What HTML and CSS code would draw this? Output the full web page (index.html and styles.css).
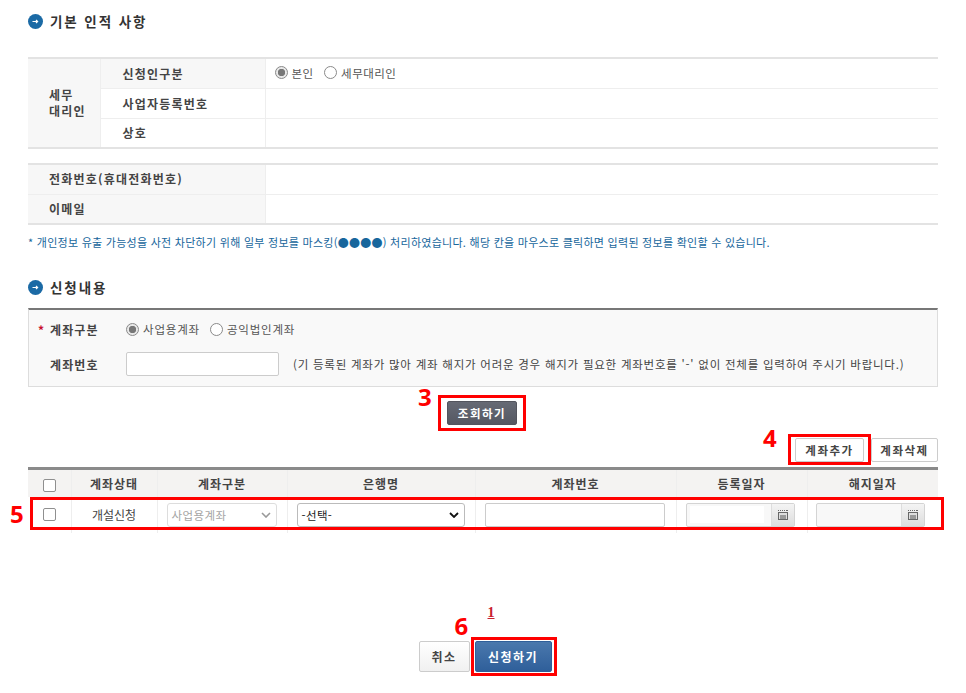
FILE: index.html
```html
<!DOCTYPE html>
<html lang="ko">
<head>
<meta charset="utf-8">
<title>신청내용</title>
<link rel="stylesheet" href="styles.css">
</head>
<body>
<main class="page">
  <h2 class="heading first">
    <svg class="bullet" viewBox="0 0 15 15"><circle cx="7.5" cy="7.5" r="7.5" fill="#1b6aa5"/><path d="M4.5 7.5h5M8 6l1.6 1.5L8 9" stroke="#fff" stroke-width="1.2" fill="none"/></svg>
    <span>기본 인적 사항</span>
  </h2>
  <table class="info">
    <colgroup><col class="c1"><col class="c2"><col></colgroup>
    <tr>
      <th rowspan="3" class="group">세무<br>대리인</th>
      <th class="sub shaded">신청인구분</th>
      <td>
        <label class="radio"><i class="dot on"></i>본인</label>
        <label class="radio"><i class="dot"></i>세무대리인</label>
      </td>
    </tr>
    <tr><th class="sub">사업자등록번호</th><td></td></tr>
    <tr><th class="sub">상호</th><td></td></tr>
  </table>
  <table class="info second">
    <colgroup><col class="wide"><col></colgroup>
    <tr><th class="group">전화번호(휴대전화번호)</th><td></td></tr>
    <tr><th class="group">이메일</th><td></td></tr>
  </table>
  <p class="note">* 개인정보 유출 가능성을 사전 차단하기 위해 일부 정보를 마스킹(●●●●) 처리하였습니다. 해당 칸을 마우스로 클릭하면 입력된 정보를 확인할 수 있습니다.</p>

  <h2 class="heading">
    <svg class="bullet" viewBox="0 0 15 15"><circle cx="7.5" cy="7.5" r="7.5" fill="#1b6aa5"/><path d="M4.5 7.5h5M8 6l1.6 1.5L8 9" stroke="#fff" stroke-width="1.2" fill="none"/></svg>
    <span>신청내용</span>
  </h2>
  <section class="search">
    <div class="search-row">
      <b class="label"><em>*</em>계좌구분</b>
      <label class="radio"><i class="dot on"></i>사업용계좌</label>
      <label class="radio"><i class="dot"></i>공익법인계좌</label>
    </div>
    <div class="search-row">
      <b class="label">계좌번호</b>
      <input class="text acct" type="text">
      <span class="hint">(기 등록된 계좌가 많아 계좌 해지가 어려운 경우 해지가 필요한 계좌번호를 '-' 없이 전체를 입력하여 주시기 바랍니다.)</span>
    </div>
  </section>
  <div class="center query-wrap">
    <div class="mark-wrap">
      <button class="btn dark">조회하기</button>
      <span class="box box3"></span><span class="num num3">3</span>
    </div>
  </div>
  <div class="right-btns">
    <div class="mark-wrap">
      <button class="btn light add">계좌추가</button>
      <span class="box box4"></span><span class="num num4">4</span>
    </div>
    <button class="btn light">계좌삭제</button>
  </div>
  <div class="mark-wrap">
    <table class="grid">
      <colgroup><col class="g1"><col class="g2"><col class="g3"><col class="g4"><col class="g5"><col class="g6"><col></colgroup>
      <tr>
        <th><i class="check"></i></th><th>계좌상태</th><th>계좌구분</th><th>은행명</th><th>계좌번호</th><th>등록일자</th><th>해지일자</th>
      </tr>
      <tr>
        <td><i class="check raised"></i></td>
        <td>개설신청</td>
        <td><span class="select off">사업용계좌<svg viewBox="0 0 10 6"><path d="M1 1l4 4 4-4" stroke="#999" stroke-width="1.6" fill="none"/></svg></span></td>
        <td><span class="select">-선택-<svg viewBox="0 0 10 6"><path d="M1 1l4 4 4-4" stroke="#111" stroke-width="1.8" fill="none"/></svg></span></td>
        <td><input class="text full" type="text"></td>
        <td>
          <span class="date"><span class="date-field"><i class="date-white"></i></span><span class="cal"><svg viewBox="0 0 12 12"><path d="M1 1.5h1M3 1.5h1M5 1.5h1M7 1.5h1M9 1.5h2" stroke="#666"/><rect x="1.5" y="3.5" width="9" height="7" fill="#ddd" stroke="#666"/><path d="M3 7h6M3 9h6" stroke="#555"/></svg></span></span>
        </td>
        <td>
          <span class="date"><span class="date-field"></span><span class="cal"><svg viewBox="0 0 12 12"><path d="M1 1.5h1M3 1.5h1M5 1.5h1M7 1.5h1M9 1.5h2" stroke="#666"/><rect x="1.5" y="3.5" width="9" height="7" fill="#ddd" stroke="#666"/><path d="M3 7h6M3 9h6" stroke="#555"/></svg></span></span>
        </td>
      </tr>
    </table>
    <span class="box box5"></span><span class="num num5">5</span>
  </div>
  <div class="center submit-wrap">
    <div class="mark-wrap submit-row">
      <a class="foot-link">1</a>
      <button class="btn cancel">취소</button>
      <div class="mark-wrap">
        <button class="btn primary">신청하기</button>
        <span class="box box6"></span><span class="num num6">6</span>
      </div>
    </div>
  </div>
</main>
</body>
</html>
```
FILE: styles.css
```css
* { box-sizing: border-box; }
html, body { margin: 0; padding: 0; background: #fff; }
body {
  width: 966px;
  height: 693px;
  overflow: hidden;
  font-family: "Noto Sans CJK KR", "Noto Sans", sans-serif;
  font-size: 12px;
  color: #333;
}
.page { width: 938px; padding-left: 28px; }
.heading {
  display: flex;
  align-items: center;
  gap: 7px;
  height: 20px;
  margin: 0;
  font-size: 13.5px;
  font-weight: 700;
  color: #333;
  letter-spacing: 1.9px;
}
.heading.first { margin-top: 11px; }
.bullet { width: 15px; height: 15px; flex: none; }

table { border-collapse: collapse; table-layout: fixed; width: 910px; }
.info { margin-top: 26px; border-top: 2px solid #e3e3e3; border-bottom: 2px solid #e3e3e3; }
.info.second { margin-top: 14px; }
.info tr { height: 30px; }
.info th, .info td { padding: 0; border-bottom: 1px solid #eee; font-size: 12px; }
.info tr:last-child th, .info tr:last-child td { border-bottom: 0; }
.info th { background: #f7f7f7; text-align: left; font-weight: 700; color: #444; letter-spacing: 1.2px; border-right: 1px solid #eee; }
.info td { padding-left: 9px; color: #555; }
.c1 { width: 72px; }
.c2 { width: 165px; }
.wide { width: 237px; }
.info th.group { padding-left: 21px; line-height: 16px; }
.info th.sub { padding-left: 22px; background: #fff; }
.info th.sub.shaded { background: #f7f7f7; }
.radio { display: inline-flex; align-items: center; gap: 4px; margin-right: 7px; font-size: 11.5px; color: #555; letter-spacing: .5px; }
.dot { width: 13px; height: 13px; border: 1px solid #8a8a8a; border-radius: 50%; background: #fff; display: inline-block; }
.dot.on { background: radial-gradient(circle, #777 0 3.4px, #e8e8e8 4px); }

.note { margin: 10px 0 0; height: 15px; font-size: 11px; line-height: 15px; color: #17669c; white-space: nowrap; letter-spacing: .27px; }

.heading:not(.first) { margin-top: 27px; }
.search {
  height: 79px;
  margin-top: 11px;
  border: 1px solid #ddd;
  border-top: 2px solid #777;
  background: #f9f9f9;
  padding-top: 9px;
}
.search-row { display: flex; align-items: center; height: 20px; padding-left: 21px; }
.search-row + .search-row { margin-top: 13px; height: 24px; }
.label { width: 76px; font-weight: 700; color: #444; letter-spacing: 1.1px; position: relative; }
.label em { position: absolute; left: -12px; color: #c8102e; font-style: normal; }
.search .radio { font-size: 11.5px; margin-right: 10px; letter-spacing: .8px; }
.text { height: 24px; border: 1px solid #ccc; border-radius: 2px; background: #fff; }
.acct { width: 153px; }
.hint { margin-left: 14px; font-size: 11.5px; color: #444; letter-spacing: .76px; white-space: nowrap; }

.center { display: flex; justify-content: center; }
.mark-wrap { position: relative; }
.query-wrap { margin-top: 14px; padding-left: 53px; margin-left: -55px; }
.btn { display: block; font-family: inherit; font-weight: 700; font-size: 11.5px; border-radius: 2px; padding: 0; cursor: pointer; letter-spacing: 1.5px; }
.dark { width: 70px; height: 24px; color: #fff; background: linear-gradient(#666a75, #555862); border: 1px solid #53555e; }
.right-btns { display: flex; justify-content: flex-end; gap: 7px; margin-top: 13px; }
.light { width: 67px; height: 24px; background: #fff; color: #444; border: 1px solid #ccc; }
.light.add { width: 69px; }
.grid { margin-top: 5px; border-top: 3px solid #8a8a8a; }
.g1 { width: 43px; } .g2 { width: 86px; } .g3 { width: 130px; } .g4 { width: 188px; } .g5 { width: 201px; } .g6 { width: 131px; }
.grid th, .grid td { padding: 0; text-align: center; border-right: 1px solid #eee; font-size: 12px; }
.grid th:last-child, .grid td:last-child { border-right: 0; }
.grid th { height: 28px; background: #f4f3f2; font-weight: 700; color: #444; letter-spacing: 1px; }
.grid td { height: 36px; color: #444; }
.check { display: inline-block; width: 13px; height: 13px; vertical-align: middle; border: 1px solid #8f8f8f; border-radius: 2px; background: #fff; }
.check.raised { margin-bottom: 3px; }
.select {
  display: flex; justify-content: space-between; align-items: center;
  height: 24px; margin: 0 10px 0 9px; padding: 0 5px 0 4px;
  border: 1px solid #bbb; border-radius: 3px; background: #fff; font-size: 11.5px; text-align: left; color: #222; letter-spacing: .4px;
}
.select svg { width: 10px; height: 6px; }
.select.off { color: #a5a5a5; border-color: #ddd; }
.full { width: 180px; display: inline-block; vertical-align: middle; margin-right: 1px; }
.date { display: flex; height: 24px; margin: 0 12px 0 9px; border: 1px solid #d4d4d4; border-radius: 2px; background: #f8f8f8; }
.grid td:last-child .date { margin-left: 8px; margin-right: 13px; }
.date-field { flex: 1; display: flex; align-items: center; padding-left: 3px; }
.date-white { display: block; width: 74px; height: 17px; background: #fff; }
.cal { width: 23px; display: flex; align-items: center; justify-content: center; background: linear-gradient(#f4f4f4, #ddd); border-left: 1px solid #ddd; }
.cal svg { width: 12px; height: 12px; }

.submit-wrap { margin-top: 108px; padding-left: 4px; }
.submit-row { display: flex; gap: 5px; }
.cancel { width: 51px; height: 31px; background: linear-gradient(#fff, #f0f0f0); color: #444; border: 1px solid #ccc; font-size: 12px; }
.primary { width: 77px; height: 31px; color: #fff; background: linear-gradient(#4a78ad, #2f5f9a); border: 1px solid #2f5f9a; font-size: 12px; }
.foot-link { position: absolute; left: 69px; top: -36px; font-family: "Liberation Serif", serif; font-size: 14px; font-weight: 700; color: #c8202e; text-decoration: underline; }

.box { position: absolute; border: 3px solid #f00; pointer-events: none; }
.num { position: absolute; color: #f00; font-family: "Open Sans", sans-serif; font-weight: 700; font-size: 24px; line-height: 28px; }
.box3 { left: -9px; top: -6px; width: 88px; height: 36px; }
.num3 { left: -29px; top: -18px; }
.box4 { left: -7px; top: -4px; width: 83px; height: 31px; }
.num4 { left: -32px; top: -14px; }
.box5 { left: 2px; top: 30px; width: 914px; height: 33px; }
.num5 { left: -18px; top: 33px; }
.box6 { left: -4px; top: -4px; width: 86px; height: 39px; }
.num6 { left: -20px; top: -29px; }
```
